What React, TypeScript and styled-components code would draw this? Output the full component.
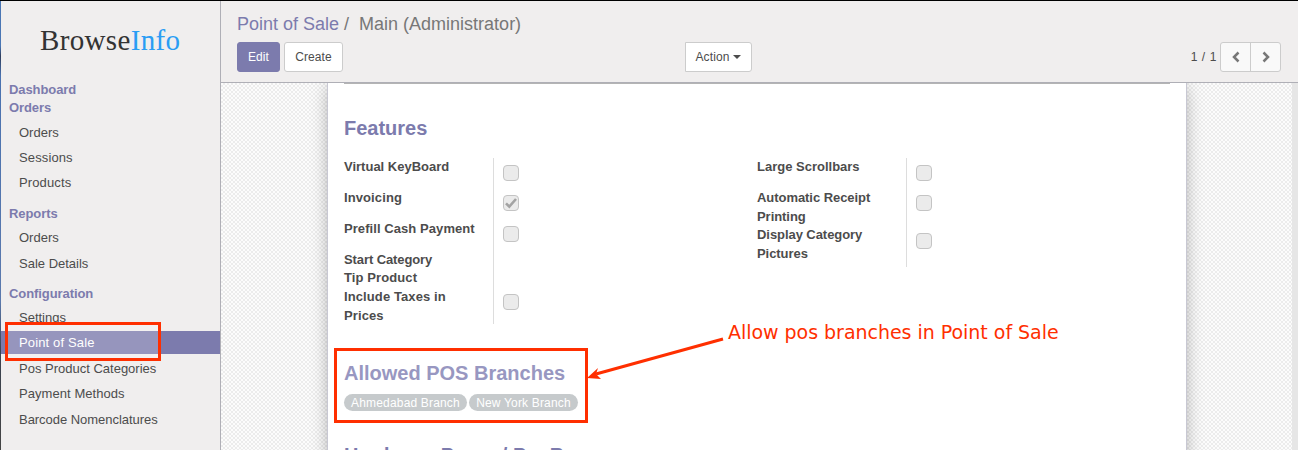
import React from "react";
import styled, { createGlobalStyle } from "styled-components";

const PURPLE = "#7c7bad";
const RED = "#ff2f00";

const GlobalStyle = createGlobalStyle`
  *, *::before, *::after { box-sizing: border-box; }
  body {
    margin: 0;
    overflow: hidden;
    font-family: "Liberation Sans", Arial, sans-serif;
    font-size: 13px;
    color: #4c4c4c;
  }
`;

const Page = styled.div`
  position: relative;
  display: flex;
  height: 450px;
  border-top: 1px solid #000;
  background: #f0eeee;
  overflow: hidden;
`;

const DesktopEdge = styled.div`
  flex: 0 0 1px;
  background: linear-gradient(#4a76b4 0, #4a76b4 45px, #2f3d5c 55px, #4a72b0 75px, #5b79ad 300px, #3a4250 350px, #444 100%);
`;

const Sidebar = styled.nav`
  flex: 0 0 220px;
  border-right: 1px solid #afafb6;
`;

const Logo = styled.div`
  height: 80px;
  padding: 22px 0 0 39px;
  font: 29px/34px "Liberation Serif", "Times New Roman", serif;
  letter-spacing: 0.35px;
  color: #333;
  white-space: nowrap;
  span { color: #2a9df4; }
`;

const SectionTitle = styled.div<{ $top?: number }>`
  margin-top: ${(p) => p.$top ?? 0}px;
  padding-left: 8px;
  height: 18px;
  line-height: 18px;
  font-weight: bold;
  letter-spacing: -0.08px;
  color: ${PURPLE};
`;

const MenuList = styled.div<{ $top: number; $gap: number }>`
  display: flex;
  flex-direction: column;
  gap: ${(p) => p.$gap}px;
  padding-top: ${(p) => p.$top}px;
`;

const MenuItem = styled.div<{ $active?: boolean; $spacing?: number }>`
  height: 23px;
  padding-left: 18px;
  line-height: 24px;
  letter-spacing: ${(p) => p.$spacing ?? 0}px;
  background: ${(p) => (p.$active ? PURPLE : "transparent")};
  color: ${(p) => (p.$active ? "#fff" : "#4c4c4c")};
`;

const Main = styled.main`
  flex: 1;
  display: flex;
  flex-direction: column;
  min-width: 0;
`;

const ControlPanel = styled.header`
  flex: 0 0 82px;
  padding: 11px 17px 0 16px;
  border-bottom: 1px solid #afafb6;
`;

const Breadcrumb = styled.div`
  height: 24px;
  line-height: 24px;
  font-size: 18px;
  color: #777;
  white-space: pre;
  span { color: ${PURPLE}; }
`;

const Toolbar = styled.div`
  display: grid;
  grid-template-columns: 448px 1fr auto;
  align-items: start;
  margin-top: 6px;
`;

const ButtonRow = styled.div`
  display: flex;
  gap: 4px;
`;

const Button = styled.button<{ $primary?: boolean; $width: number; $square?: boolean }>`
  display: flex;
  align-items: center;
  justify-content: center;
  gap: 4px;
  width: ${(p) => p.$width}px;
  height: 30px;
  padding: 0;
  border: 1px solid ${(p) => (p.$primary ? PURPLE : "#ccc")};
  border-radius: ${(p) => (p.$square ? "0 3px 3px 0" : "3px")};
  background: ${(p) => (p.$primary ? PURPLE : "#fff")};
  color: ${(p) => (p.$primary ? "#fff" : "#4c4c4c")};
  font: 12px/18px "Liberation Sans", Arial, sans-serif;
  letter-spacing: 0.1px;
`;

const Caret = styled.span`
  border: 4px solid transparent;
  border-top-color: currentColor;
  border-bottom: 0;
`;

const Pager = styled.div`
  display: flex;
  align-items: center;
  font-size: 12px;
  letter-spacing: 0.6px;
`;

const PagerButtons = styled.div`
  display: flex;
  margin-left: 3px;
  height: 30px;
  border: 1px solid #ccc;
  border-radius: 3px;
  background: #f9f9f9;
`;

const PagerButton = styled.div`
  display: flex;
  align-items: center;
  justify-content: center;
  width: 29px;
  & + & { width: 30px; border-left: 1px solid #ccc; }
`;

const FormArea = styled.div`
  flex: 1;
  display: flex;
  padding-left: 106px;
  border-right: 6px solid #e6e6e6;
  background: repeating-conic-gradient(#ececec 0 25%, #fcfcfc 0 50%) 0 0 / 4px 4px;
  overflow: hidden;
`;

const Sheet = styled.section`
  width: 860px;
  height: 420px;
  padding: 0 16px;
  border: solid #c8c8d3;
  border-width: 0 1px;
  background: #fff;
  box-shadow: 0 0 18px -4px rgba(0, 0, 0, 0.4);
`;

const Rule = styled.div`
  height: 1px;
  background: #b4b4b4;
`;

const Heading = styled.h2<{ $top: number; $muted?: boolean }>`
  margin: ${(p) => p.$top}px 0 0;
  height: 24px;
  font-size: 20px;
  line-height: 24px;
  color: ${(p) => (p.$muted ? "#9897c1" : PURPLE)};
`;

const Groups = styled.div`
  display: grid;
  grid-template-columns: 413px 1fr;
  align-items: start;
  height: 166px;
  margin-top: 18px;
`;

const Group = styled.div<{ $height: number }>`
  height: ${(p) => p.$height}px;
  background: linear-gradient(#ddd, #ddd) 149px 0 / 1px 100% no-repeat;
`;

const FieldRow = styled.div<{ $height: number }>`
  display: grid;
  grid-template-columns: 159px 1fr;
  align-items: start;
  height: ${(p) => p.$height}px;
`;

const Label = styled.label<{ $spacing?: number; $drop?: number }>`
  padding-top: ${(p) => p.$drop ?? 0}px;
  line-height: 18.6px;
  font-weight: bold;
  white-space: pre-line;
  letter-spacing: ${(p) => p.$spacing ?? 0}px;
`;

const Box = styled.span`
  display: flex;
  width: 16px;
  height: 16px;
  margin-top: 7px;
  border: 1px solid #c4c4c4;
  border-radius: 4px;
  background: #ebebeb;
`;

const Tags = styled.div`
  display: flex;
  gap: 2px;
  margin-top: 9px;
`;

const Tag = styled.span<{ $width: number }>`
  width: ${(p) => p.$width}px;
  height: 17px;
  border-radius: 9px;
  background: #c6cacc;
  color: #fff;
  font-size: 12px;
  line-height: 18px;
  letter-spacing: 0.17px;
  text-align: center;
  white-space: nowrap;
`;

const Highlight = styled.div<{ $x: number; $y: number; $w: number; $h: number; $tint?: boolean }>`
  position: absolute;
  left: ${(p) => p.$x}px;
  top: ${(p) => p.$y}px;
  width: ${(p) => p.$w}px;
  height: ${(p) => p.$h}px;
  border: 3px solid ${RED};
  background: ${(p) => (p.$tint ? "rgba(255,255,255,0.2)" : "transparent")};
`;

const Arrow = styled.svg`
  position: absolute;
  left: 580px;
  top: 329px;
`;

const Note = styled.div`
  position: absolute;
  left: 728px;
  top: 319px;
  font: 19px/24px "DejaVu Sans", sans-serif;
  letter-spacing: -0.03px;
  color: ${RED};
  white-space: nowrap;
`;

type Field = { label: string; height: number; box?: "on" | "off"; spacing?: number; drop?: number };

const leftFields: Field[] = [
  { label: "Virtual KeyBoard", height: 30, box: "off" },
  { label: "Invoicing", height: 31, box: "on", spacing: 0.1, drop: 1 },
  { label: "Prefill Cash Payment", height: 31, box: "off", spacing: 0.07, drop: 1 },
  { label: "Start Category", height: 18, spacing: -0.1, drop: 1 },
  { label: "Tip Product", height: 19, spacing: 0.1, drop: 1 },
  { label: "Include Taxes in\nPrices", height: 37, box: "off", spacing: 0.1, drop: 1 },
];

const rightFields: Field[] = [
  { label: "Large Scrollbars", height: 30, box: "off" },
  { label: "Automatic Receipt\nPrinting", height: 38, box: "off", spacing: -0.05, drop: 1 },
  { label: "Display Category\nPictures", height: 38, box: "off", spacing: -0.06 },
];

const FieldGroup = ({ fields, height }: { fields: Field[]; height: number }) => (
  <Group $height={height}>
    {fields.map((f) => (
      <FieldRow key={f.label} $height={f.height}>
        <Label $spacing={f.spacing} $drop={f.drop}>{f.label}</Label>
        {f.box && (
          <Box>
            {f.box === "on" && (
              <svg width="14" height="14" viewBox="0 0 14 14" fill="none" stroke="#a3a3a3" strokeWidth="2.6">
                <path d="M2 7.3 5.3 10.6 12 3" />
              </svg>
            )}
          </Box>
        )}
      </FieldRow>
    ))}
  </Group>
);

const Chevron = ({ d }: { d: string }) => (
  <svg width="12" height="12" viewBox="0 0 12 12" fill="none" stroke="#777" strokeWidth="2.5">
    <path d={d} />
  </svg>
);

export default function App() {
  return (
    <Page>
      <GlobalStyle />
      <DesktopEdge />
      <Sidebar>
        <Logo>Browse<span>Info</span></Logo>
        <SectionTitle>Dashboard</SectionTitle>
        <SectionTitle>Orders</SectionTitle>
        <MenuList $top={4} $gap={2}>
          <MenuItem>Orders</MenuItem>
          <MenuItem $spacing={0.12}>Sessions</MenuItem>
          <MenuItem $spacing={0.12}>Products</MenuItem>
        </MenuList>
        <SectionTitle $top={11}>Reports</SectionTitle>
        <MenuList $top={3} $gap={3}>
          <MenuItem>Orders</MenuItem>
          <MenuItem>Sale Details</MenuItem>
        </MenuList>
        <SectionTitle $top={10}>Configuration</SectionTitle>
        <MenuList $top={3} $gap={2.4}>
          <MenuItem>Settings</MenuItem>
          <MenuItem $active $spacing={0.14}>Point of Sale</MenuItem>
          <MenuItem>Pos Product Categories</MenuItem>
          <MenuItem $spacing={0.06}>Payment Methods</MenuItem>
          <MenuItem $spacing={-0.04}>Barcode Nomenclatures</MenuItem>
        </MenuList>
      </Sidebar>
      <Main>
        <ControlPanel>
          <Breadcrumb><span>Point of Sale</span> /  Main (Administrator)</Breadcrumb>
          <Toolbar>
            <ButtonRow>
              <Button $primary $width={43}>Edit</Button>
              <Button $width={59}>Create</Button>
            </ButtonRow>
            <Button $width={67} $square>Action<Caret /></Button>
            <Pager>
              1 / 1
              <PagerButtons>
                <PagerButton><Chevron d="M8.5 1.5 4 6l4.5 4.5" /></PagerButton>
                <PagerButton><Chevron d="M3.5 1.5 8 6l-4.5 4.5" /></PagerButton>
              </PagerButtons>
            </Pager>
          </Toolbar>
        </ControlPanel>
        <FormArea>
          <Sheet>
            <Rule />
            <Heading $top={32}>Features</Heading>
            <Groups>
              <FieldGroup fields={leftFields} height={166} />
              <FieldGroup fields={rightFields} height={109} />
            </Groups>
            <Heading $top={37} $muted>Allowed POS Branches</Heading>
            <Tags>
              <Tag $width={123}>Ahmedabad Branch</Tag>
              <Tag $width={109}>New York Branch</Tag>
            </Tags>
            <Heading $top={32}>Hardware Proxy / PosBox</Heading>
          </Sheet>
        </FormArea>
      </Main>
      <Highlight $x={5} $y={321} $w={156} $h={39} $tint />
      <Highlight $x={334} $y={347} $w={254} $h={75} />
      <Arrow width="145" height="60" viewBox="0 0 145 60">
        <path d="M143 9 16 44" stroke={RED} strokeWidth="3" />
        <path d="M7 48 18 38 16 44 21 49Z" fill={RED} />
      </Arrow>
      <Note>Allow pos branches in Point of Sale</Note>
    </Page>
  );
}
